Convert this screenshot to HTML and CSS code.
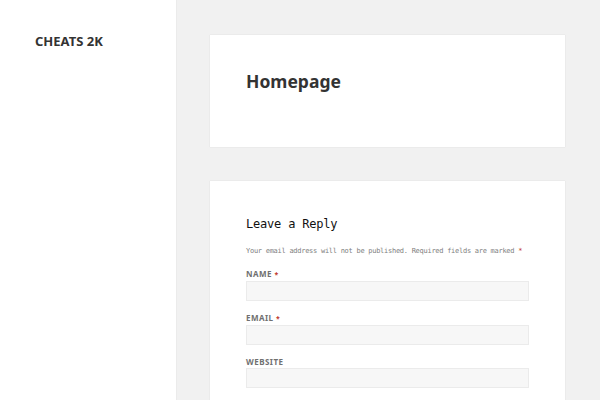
FILE: index.html
```html
<!DOCTYPE html>
<html lang="en">
<head>
    <meta charset="UTF-8">
    <meta name="viewport" content="width=device-width, initial-scale=1.0">
    <title>Homepage - Cheats 2K</title>
    <link rel="stylesheet" href="styles.css">
</head>
<body>
    <div class="sidebar">
        <p class="site-title"><a href="#">Cheats 2K</a></p>
    </div>
    <div class="site-content">
        <article class="card page">
            <h1 class="entry-title">Homepage</h1>
        </article>
        <div class="card comments">
            <h3 class="reply-title">Leave a Reply</h3>
            <p class="comment-notes">Your email address will not be published. Required fields are marked <span class="required">*</span></p>
            <form>
                <div class="field">
                    <label for="author">Name <span class="required">*</span></label>
                    <input type="text" id="author">
                </div>
                <div class="field">
                    <label for="email">Email <span class="required">*</span></label>
                    <input type="email" id="email">
                </div>
                <div class="field">
                    <label for="url">Website</label>
                    <input type="url" id="url">
                </div>
            </form>
        </div>
    </div>
</body>
</html>
```

FILE: styles.css
```css
/* General Reset */
* {
    margin: 0;
    padding: 0;
    box-sizing: border-box;
}

body {
    font-family: 'Noto Sans', sans-serif;
    background: #f1f1f1;
    color: #333;
    display: flex;
    min-height: 100vh;
    overflow: hidden;
}

.sidebar {
    width: 176px;
    flex-shrink: 0;
    background: #fff;
    box-shadow: 0 0 1px rgba(0, 0, 0, 0.15);
    padding: 33px 0 0 35px;
}

.site-title {
    font-size: 13px;
    font-weight: bold;
    line-height: 16px;
    text-transform: uppercase;
}

.site-title a {
    color: #333;
    text-decoration: none;
}

.site-content {
    width: 355px;
    margin-left: 34px;
    padding-top: 35px;
}

.card {
    background: #fff;
    box-shadow: 0 0 1px rgba(0, 0, 0, 0.15);
    padding: 0 36px;
}

.page {
    padding-top: 35px;
    padding-bottom: 55px;
    margin-bottom: 34px;
}

.entry-title {
    font-size: 17.5px;
    line-height: 22px;
    font-weight: bold;
}

.comments {
    padding-top: 35px;
    padding-bottom: 40px;
}

.reply-title {
    font-family: 'DejaVu Sans Mono', monospace;
    font-size: 12px;
    font-weight: normal;
    line-height: 16px;
    letter-spacing: -0.2px;
    color: #111;
    margin-bottom: 14px;
}

.comment-notes {
    font-family: 'DejaVu Sans Mono', monospace;
    font-size: 7px;
    line-height: 10px;
    letter-spacing: -0.27px;
    color: #808080;
    margin-bottom: 13px;
}

.required {
    color: #c0392b;
}

.field {
    margin-bottom: 12px;
}

.field label {
    display: block;
    font-size: 8px;
    font-weight: bold;
    line-height: 10px;
    letter-spacing: 0.06em;
    text-transform: uppercase;
    color: #707070;
    margin-bottom: 1px;
}

.field label .required {
    font-size: 7px;
}

.field input {
    display: block;
    width: 100%;
    height: 20px;
    background: #f7f7f7;
    border: 1px solid #ebebeb;
    outline: none;
}
```
